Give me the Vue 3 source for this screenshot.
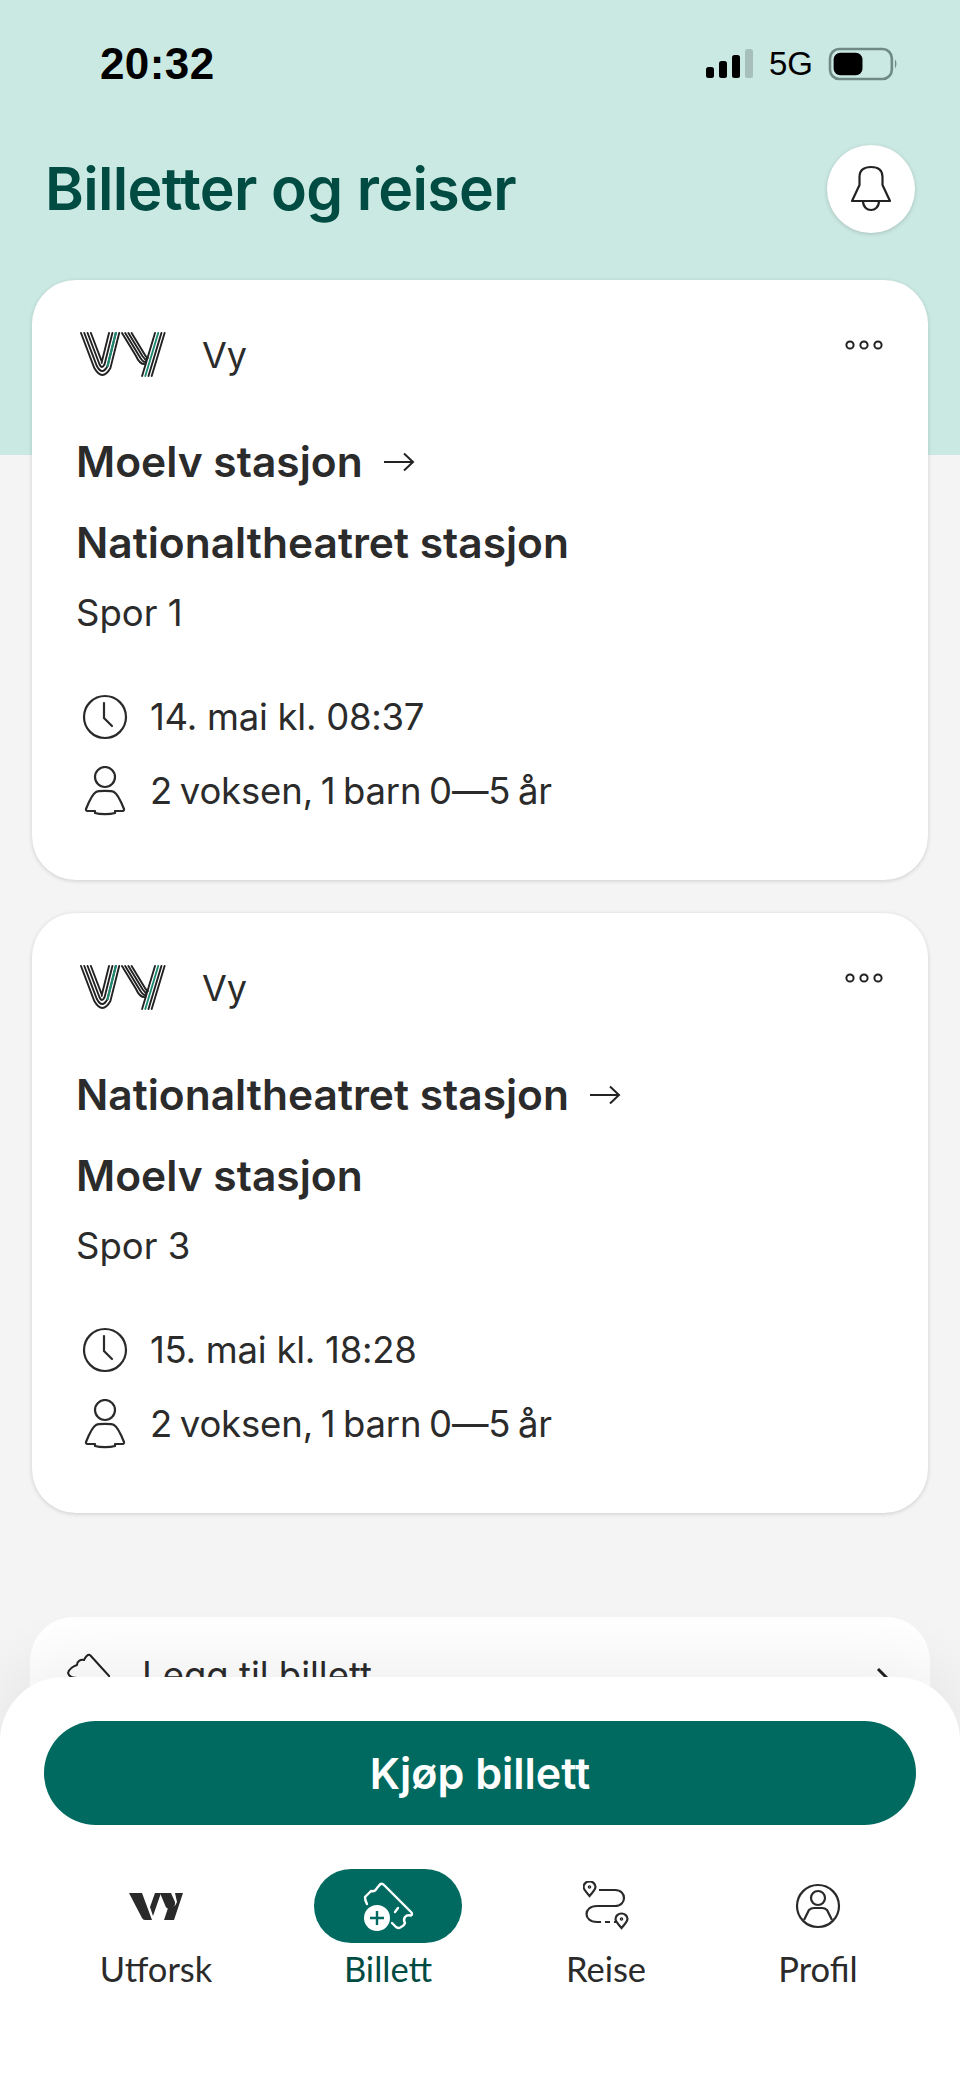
<script setup>
const tickets = [
  { from: "Moelv stasjon", to: "Nationaltheatret stasjon", track: "Spor 1", when: "14. mai kl. 08:37" },
  { from: "Nationaltheatret stasjon", to: "Moelv stasjon", track: "Spor 3", when: "15. mai kl. 18:28" },
];
const passengers = "2 voksen, 1 barn 0—5 år";

// the four stripes of the logo, each leg is a straight line with a slope
const stripes = [0, 1, 2, 3];
const leftX = (y, i) => 1 + 3.3 * i + 0.38 * (y - 1);
const rightX = (y, j) => 29 + 3.4 * j - 0.25 * (y - 1);
const tailX = (y, j) => 75 + 3.2 * j - 0.3 * (y - 1);

function vStripe(i) {
  const y = 36 - 2 * i;
  const x1 = leftX(y, i);
  const x2 = rightX(y, 3 - i);
  return `M${leftX(1, i)} 1 L${x1} ${y} Q${(x1 + x2) / 2} ${50 - 6 * i} ${x2} ${y} L${rightX(1, 3 - i)} 1`;
}
function vGreen() {
  return `M${rightX(34, 2)} 34 L${rightX(1, 2)} 1`;
}
function armStripe(i) {
  const o = 3.2 * i;
  return `M${42 + o} 1 L${56 + o} 24 Q${60 + o} ${33 - 2 * i} ${65.5 + i * 0.3} ${32 - 2 * i}`;
}
function tailStripe(j) {
  return `M${tailX(1, j)} 1 L${tailX(44, j)} 44`;
}
</script>

<template>
  <div class="phone">
    <div class="hero">
      <div class="status">
        <span class="time">20:32</span>
        <div class="status-right">
          <svg class="signal" width="48" height="32" viewBox="0 0 48 32">
            <rect x="0" y="19" width="8" height="11" rx="2.5" fill="#000" />
            <rect x="13" y="13" width="8" height="17" rx="2.5" fill="#000" />
            <rect x="26" y="7" width="8" height="23" rx="2.5" fill="#000" />
            <rect x="39" y="1" width="8" height="29" rx="2.5" fill="#a6bfba" />
          </svg>
          <span class="net">5G</span>
          <svg width="71" height="34" viewBox="0 0 68 33">
            <rect x="1.500" y="2" width="60" height="29" rx="9" fill="none" stroke="#6f8a85" stroke-width="2.500" />
            <rect x="5" y="5.500" width="28" height="22" rx="6.500" fill="#000" />
            <path d="M64.500 12 Q67.500 16.500 64.500 21 Z" fill="#6f8a85" />
          </svg>
        </div>
      </div>
      <div class="title-row">
        <h1>Billetter og reiser</h1>
        <button class="bell">
          <svg width="42" height="48" viewBox="0 0 42 48" fill="none" stroke="#222" stroke-width="2.200" stroke-linejoin="round">
            <path d="M2 36 L9.500 20 V12 C9.500 5 14 2 21 2 C28 2 32.500 5 32.500 12 V20 L40 36 Z" />
            <path d="M13 36 C13 42 17 45 21 45 C25 45 29 42 29 36" />
          </svg>
        </button>
      </div>
    </div>

    <div class="list">
      <section v-for="t in tickets" :key="t.track" class="card">
        <div class="card-top">
          <svg class="vy" width="87" height="46" viewBox="0 0 87 46" fill="none" stroke="#222" stroke-width="1.900" stroke-linecap="round">
            <path v-for="i in stripes" :key="'v' + i" :d="vStripe(i)" />
            <path :d="vGreen()" stroke="#1f8a72" stroke-width="2.200" />
            <path v-for="i in stripes" :key="'a' + i" :d="armStripe(i)" />
            <path v-for="i in stripes" :key="'t' + i" :d="tailStripe(i)" :stroke="i === 1 ? '#1f8a72' : '#222'" />
          </svg>
          <span class="operator">Vy</span>
          <svg class="more" width="38" height="12" viewBox="0 0 38 12" fill="none" stroke="#222" stroke-width="2">
            <circle cx="5" cy="6" r="3.600" />
            <circle cx="19" cy="6" r="3.600" />
            <circle cx="33" cy="6" r="3.600" />
          </svg>
        </div>
        <div class="route">
          <span>{{ t.from }}</span>
          <svg width="32" height="22" viewBox="0 0 32 22" fill="none" stroke="#222" stroke-width="2">
            <path d="M1 11 H30 M21 2.500 L30 11 L21 19.500" />
          </svg>
        </div>
        <div class="route second">{{ t.to }}</div>
        <div class="track">{{ t.track }}</div>
        <div class="info">
          <svg width="46" height="46" viewBox="0 0 46 46" fill="none" stroke="#2a2a2a" stroke-width="2.200">
            <circle cx="23" cy="23" r="21" />
            <path d="M22 9 V24 L30 32" stroke-linecap="round" />
          </svg>
          <span class="when">{{ t.when }}</span>
        </div>
        <div class="info">
          <svg width="46" height="50" viewBox="0 0 46 50" fill="none" stroke="#2a2a2a" stroke-width="2.200" stroke-linejoin="round">
            <circle cx="23" cy="11" r="10" />
            <path d="M14 26 C16 24.500 30 24.500 32 26 C36 28 40 38 42 43 C42.500 44.500 41 45 40 45 H33 V47 C28 48.500 18 48.500 13 47 V45 H6 C5 45 3.500 44.500 4 43 C6 38 10 28 14 26 Z" />
          </svg>
          <span class="who">{{ passengers }}</span>
        </div>
      </section>

      <div class="add-row">
        <svg width="44" height="44" viewBox="0 0 44 44" fill="none" stroke="#222" stroke-width="2" stroke-linejoin="round">
          <path d="M24 2 C22 1 20 3 18 7 C15 6 11 8 11 12 C8 13 3 16 2 20 C3 24 8 25 12 25 M24 2 L44 24" />
        </svg>
        <span>Legg til billett</span>
        <svg class="chev" width="14" height="24" viewBox="0 0 14 24" fill="none" stroke="#222" stroke-width="3">
          <path d="M2 2 L12 12 L2 22" />
        </svg>
      </div>
    </div>

    <div class="sheet">
      <button class="buy">Kjøp billett</button>
      <nav class="tabs">
        <div class="tab">
          <div class="tab-icon">
            <svg width="54" height="28" viewBox="0 0 54 28" fill="#2a2a2a">
              <path d="M0 1 H13 L23 28 H16 Q14 28 13 26 Z" />
              <path d="M21 15 L26 1 H32 L24 24 Z" />
              <path d="M31 1 H42 L46 10 Q47 15 41 17 Q37 17 36 13 Z" />
              <path d="M46 1 H54 L45 28 H35 L39 16 Q46 16 48 10 Z" />
            </svg>
          </div>
          <span>Utforsk</span>
        </div>
        <div class="tab active">
          <div class="tab-icon pill">
            <svg width="54" height="50" viewBox="12 10 54 50" fill="none">
              <path d="M31 13.500 Q33 12 35 14 L62 41 Q64 43 62 44.500 Q58 43.500 56 46 Q54 49 56 52 Q55 55 52 56 Q50 58 47 56 L43 52" stroke="#fff" stroke-width="2.400" stroke-linejoin="round" stroke-linecap="round" />
              <path d="M31 13.500 L28 17 Q26 21 22 20 L16 26 Q16 30 18 33" stroke="#fff" stroke-width="2.400" stroke-linejoin="round" stroke-linecap="round" />
              <path d="M49 37 L46 41" stroke="#fff" stroke-width="2.400" stroke-linecap="round" />
              <circle cx="28" cy="47" r="13" fill="#fff" />
              <path d="M28 40 V54 M21 47 H35" stroke="#016a60" stroke-width="2.400" />
            </svg>
          </div>
          <span>Billett</span>
        </div>
        <div class="tab">
          <div class="tab-icon">
            <svg width="46" height="50" viewBox="0 0 46 50" fill="none" stroke="#2a2a2a" stroke-width="2.200">
              <path d="M6.500 15 C2 10 0.500 8 0.500 6 A6 5.500 0 0 1 12.500 6 C12.500 8 11 10 6.500 15 Z" />
              <circle cx="6.500" cy="6" r="0.700" />
              <path d="M16 9 H32 C44 9 44 25 32 25 H14 C0 25 0 41 14 41 H18" />
              <path d="M22 41 H27 M31 41 H34" />
              <path d="M38.500 47 C34 42 32.500 40 32.500 38 A6 5.500 0 0 1 44.500 38 C44.500 40 43 42 38.500 47 Z" />
              <circle cx="38.500" cy="38" r="0.700" />
            </svg>
          </div>
          <span>Reise</span>
        </div>
        <div class="tab">
          <div class="tab-icon">
            <svg width="46" height="46" viewBox="0 0 46 46" fill="none" stroke="#2a2a2a" stroke-width="2.200">
              <circle cx="23" cy="23" r="21" />
              <circle cx="23" cy="15" r="7" />
              <path d="M9 37 L14 27 C15 26 17 25 19 25 H27 C29 25 31 26 32 27 L37 37" />
            </svg>
          </div>
          <span>Profil</span>
        </div>
      </nav>
    </div>
  </div>
</template>

<style>
html, body {
  margin: 0;
  background: #f4f4f4;
}
</style>

<style scoped>
.phone {
  position: relative;
  width: 960px;
  height: 2078px;
  overflow: hidden;
  background: #f4f4f4;
  font-family: Inter, "Noto Sans", sans-serif;
  color: #2b2b2b;
}

.hero {
  height: 455px;
  background: #cbe9e3;
  box-sizing: border-box;
}

.status {
  display: flex;
  justify-content: space-between;
  align-items: center;
  padding: 40px 61px 0 100px;
  height: 48px;
}

.time {
  font-family: "Liberation Sans", sans-serif;
  font-weight: 700;
  font-size: 44px;
  letter-spacing: 0.4px;
  color: #000;
}

.status-right {
  display: flex;
  align-items: center;
  gap: 15px;
}

.net {
  font-family: "Liberation Sans", sans-serif;
  font-size: 33px;
  color: #000;
}

.title-row {
  display: flex;
  justify-content: space-between;
  align-items: center;
  padding: 56px 45px 0 45px;
}

h1 {
  margin: 0;
  font-size: 59px;
  font-weight: 600;
  letter-spacing: -0.65px;
  color: #004b42;
}

.bell {
  width: 88px;
  height: 88px;
  margin-top: 1px;
  border: 0;
  border-radius: 50%;
  background: #fff;
  box-shadow: 0 1px 4px rgba(0, 0, 0, 0.18);
  display: flex;
  align-items: center;
  justify-content: center;
  padding: 0;
}

.list {
  margin-top: -175px;
  padding: 0 32px;
  display: flex;
  flex-direction: column;
  gap: 33px;
}

.card {
  background: #fff;
  border-radius: 44px;
  height: 600px;
  box-sizing: border-box;
  padding: 50px 32px 0 44px;
  box-shadow: 0 1px 4px rgba(0, 0, 0, 0.16);
}

.card-top {
  display: flex;
  align-items: center;
  height: 50px;
  position: relative;
}

.vy {
  margin-left: 4px;
}

.operator {
  margin-left: 35px;
  font-size: 36px;
}

.more {
  position: absolute;
  right: 13px;
  top: 9px;
}

.route {
  margin-top: 57px;
  display: flex;
  align-items: center;
  gap: 20px;
  font-size: 42.5px;
  line-height: 50px;
  font-weight: 600;
}

.route.second {
  margin-top: 31px;
}

.track {
  margin-top: 20px;
  font-size: 36.5px;
  line-height: 50px;
}

.info {
  display: flex;
  align-items: center;
  gap: 22px;
  font-size: 36.5px;
  line-height: 50px;
  height: 50px;
  padding-left: 6px;
}

.when {
  letter-spacing: -0.25px;
}

.who {
  letter-spacing: -0.15px;
  word-spacing: -2.5px;
}

.track + .info {
  margin-top: 54px;
}

.info + .info {
  margin-top: 24px;
}

.add-row {
  margin: 71px -2px 0;
  height: 200px;
  background: #fff;
  border-radius: 44px;
  display: flex;
  align-items: flex-start;
  padding: 36px 40px 0 36px;
  gap: 32px;
  font-size: 36.5px;
}

.chev {
  margin-left: auto;
  margin-top: 14px;
}

.sheet {
  position: absolute;
  left: 0;
  right: 0;
  top: 1677px;
  bottom: 0;
  background: #fff;
  border-radius: 64px 64px 0 0;
  padding: 44px 44px 0;
  box-shadow: 0 -20px 60px rgba(0, 0, 0, 0.06);
}

.buy {
  display: block;
  width: 100%;
  height: 104px;
  border: 0;
  border-radius: 52px;
  background: #016a60;
  color: #fff;
  font-family: inherit;
  font-size: 43px;
  font-weight: 600;
}

.tabs {
  display: grid;
  grid-template-columns: 232px 232px 204px 220px;
  margin: 44px 0 0 -4px;
}

.tab {
  display: flex;
  flex-direction: column;
  align-items: center;
  font-family: Lato, sans-serif;
  font-size: 34.5px;
  color: #2b2b2b;
}

.tab.active {
  color: #004b42;
}

.tab-icon {
  height: 74px;
  display: flex;
  align-items: center;
  justify-content: center;
  margin-bottom: 5px;
}

.pill {
  width: 148px;
  border-radius: 37px;
  background: #016a60;
}
</style>
